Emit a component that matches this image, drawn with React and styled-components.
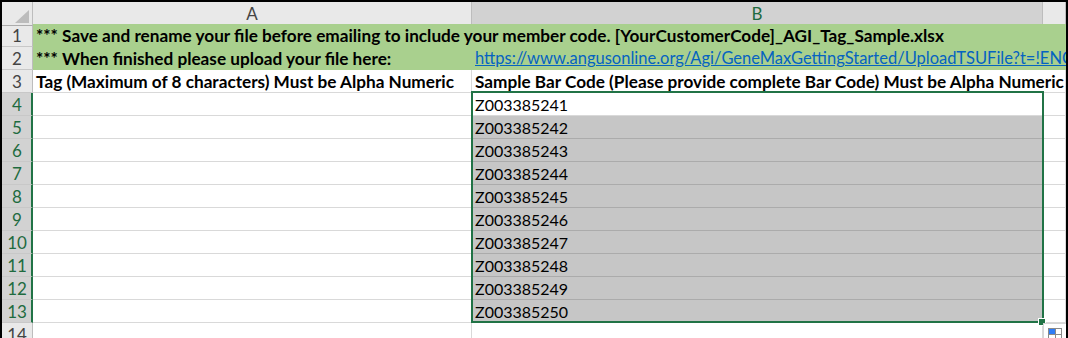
import React from "react";
import styled, { createGlobalStyle } from "styled-components";

const COLS = "31px 439px 571px 1fr";

const GlobalStyle = createGlobalStyle`
  html, body {
    margin: 0;
    padding: 0;
    background: #ffffff;
  }
`;

const Frame = styled.div`
  position: relative;
  width: 1068px;
  height: 338px;
  box-sizing: border-box;
  border: 2px solid #000000;
  border-bottom: none;
  overflow: hidden;
  background: #ffffff;
  font-family: Lato, "Liberation Sans", sans-serif;
`;

const Row = styled.div`
  display: grid;
  grid-template-columns: ${COLS};
  height: ${({ $h }) => $h || 23}px;
`;

const Corner = styled.div`
  position: relative;
  box-sizing: border-box;
  background: #e9e9e9;
  border-right: 1px solid #bdbdbd;
  border-bottom: 1px solid #ababab;
  &::after {
    content: "";
    position: absolute;
    right: 3px;
    bottom: 2px;
    width: 0;
    height: 0;
    border-left: 14px solid transparent;
    border-bottom: 13px solid #bcbcbc;
  }
`;

const ColHead = styled.div`
  box-sizing: border-box;
  display: flex;
  align-items: center;
  justify-content: center;
  font-size: 17px;
  background: ${({ $sel }) => ($sel ? "#d2d2d2" : "#e9e9e9")};
  color: ${({ $sel }) => ($sel ? "#1e6b3f" : "#444444")};
  border-right: 1px solid #bdbdbd;
  border-bottom: ${({ $sel }) => ($sel ? "2px solid #217346" : "1px solid #ababab")};
  padding-top: ${({ $sel }) => ($sel ? "1px" : "0")};
`;

const RowHead = styled.div`
  box-sizing: border-box;
  display: flex;
  align-items: center;
  justify-content: center;
  font-size: 17px;
  background: ${({ $sel }) => ($sel ? "#d2d2d2" : "#e9e9e9")};
  color: ${({ $sel }) => ($sel ? "#1e6b3f" : "#444444")};
  border-right: ${({ $sel }) => ($sel ? "2px solid #217346" : "1px solid #bdbdbd")};
  border-bottom: 1px solid #c8c8c8;
  padding-left: ${({ $sel }) => ($sel ? "1px" : "0")};
`;

const Cell = styled.div`
  box-sizing: border-box;
  display: flex;
  align-items: center;
  padding-left: 3px;
  white-space: nowrap;
  overflow: visible;
  font-size: ${({ $bold }) => ($bold ? "17.2px" : "16px")};
  font-weight: ${({ $bold }) => ($bold ? 700 : 400)};
  color: #000000;
  grid-column: span ${({ $span }) => $span || 1};
  background: ${({ $fill }) => $fill || "#ffffff"};
  border-right: 1px solid ${({ $fill, $line }) => $line || ($fill ? $fill : "#d9d9d9")};
  border-bottom: 1px solid ${({ $fill, $line }) => $line || ($fill ? $fill : "#d9d9d9")};
`;

const Link = styled.span`
  color: #0563c1;
  text-decoration: underline;
  font-weight: 400;
  font-size: 16.5px;
`;

const Selection = styled.div`
  position: absolute;
  left: 469px;
  top: 89px;
  width: 573px;
  height: 232px;
  box-sizing: border-box;
  border: 2px solid #217346;
  pointer-events: none;
`;

const Handle = styled.div`
  position: absolute;
  left: 1036px;
  top: 316px;
  width: 6px;
  height: 6px;
  background: #217346;
  border: 1px solid #ffffff;
`;

const QuickAnalysis = styled.svg`
  position: absolute;
  left: 1041px;
  top: 321px;
`;

const GREEN = "#a9d08e";
const codes = [
  "Z003385242",
  "Z003385243",
  "Z003385244",
  "Z003385245",
  "Z003385246",
  "Z003385247",
  "Z003385248",
  "Z003385249",
  "Z003385250",
];

export default function App() {
  return (
    <>
      <GlobalStyle />
      <Frame>
        <Row $h={22}>
          <Corner />
          <ColHead>A</ColHead>
          <ColHead $sel>B</ColHead>
          <ColHead />
        </Row>
        <Row>
          <RowHead>1</RowHead>
          <Cell $span={3} $fill={GREEN} $bold>
            *** Save and rename your file before emailing to include your member code. [YourCustomerCode]_AGI_Tag_Sample.xlsx
          </Cell>
        </Row>
        <Row>
          <RowHead>2</RowHead>
          <Cell $fill={GREEN} $bold>
            *** When finished please upload your file here:
          </Cell>
          <Cell $fill={GREEN} $span={2}>
            <Link>https://www.angusonline.org/Agi/GeneMaxGettingStarted/UploadTSUFile?t=!ENC!</Link>
          </Cell>
        </Row>
        <Row>
          <RowHead>3</RowHead>
          <Cell $bold>Tag (Maximum of 8 characters) Must be Alpha Numeric</Cell>
          <Cell $bold $span={2}>
            Sample Bar Code (Please provide complete Bar Code) Must be Alpha Numeric
          </Cell>
        </Row>
        <Row>
          <RowHead $sel>4</RowHead>
          <Cell />
          <Cell>Z003385241</Cell>
          <Cell />
        </Row>
        {codes.map((code, i) => (
          <Row key={code}>
            <RowHead $sel>{i + 5}</RowHead>
            <Cell />
            <Cell $fill="#c6c6c6" $line="#ababab">
              {code}
            </Cell>
            <Cell />
          </Row>
        ))}
        <Row>
          <RowHead>14</RowHead>
          <Cell />
          <Cell />
          <Cell />
        </Row>
        <Selection />
        <Handle />
        <QuickAnalysis width="26" height="17" viewBox="0 0 26 17">
          <rect x="0.5" y="0.5" width="25" height="17" fill="#ffffff" stroke="#d6d6d6" />
          <rect x="5.5" y="5.5" width="13" height="12" fill="#ffffff" stroke="#8a8a8a" />
          <rect x="6" y="6" width="6" height="5" fill="#2f7df6" />
          <line x1="12.5" y1="6" x2="12.5" y2="17" stroke="#8a8a8a" />
          <line x1="6" y1="11.5" x2="18" y2="11.5" stroke="#8a8a8a" />
        </QuickAnalysis>
      </Frame>
    </>
  );
}
